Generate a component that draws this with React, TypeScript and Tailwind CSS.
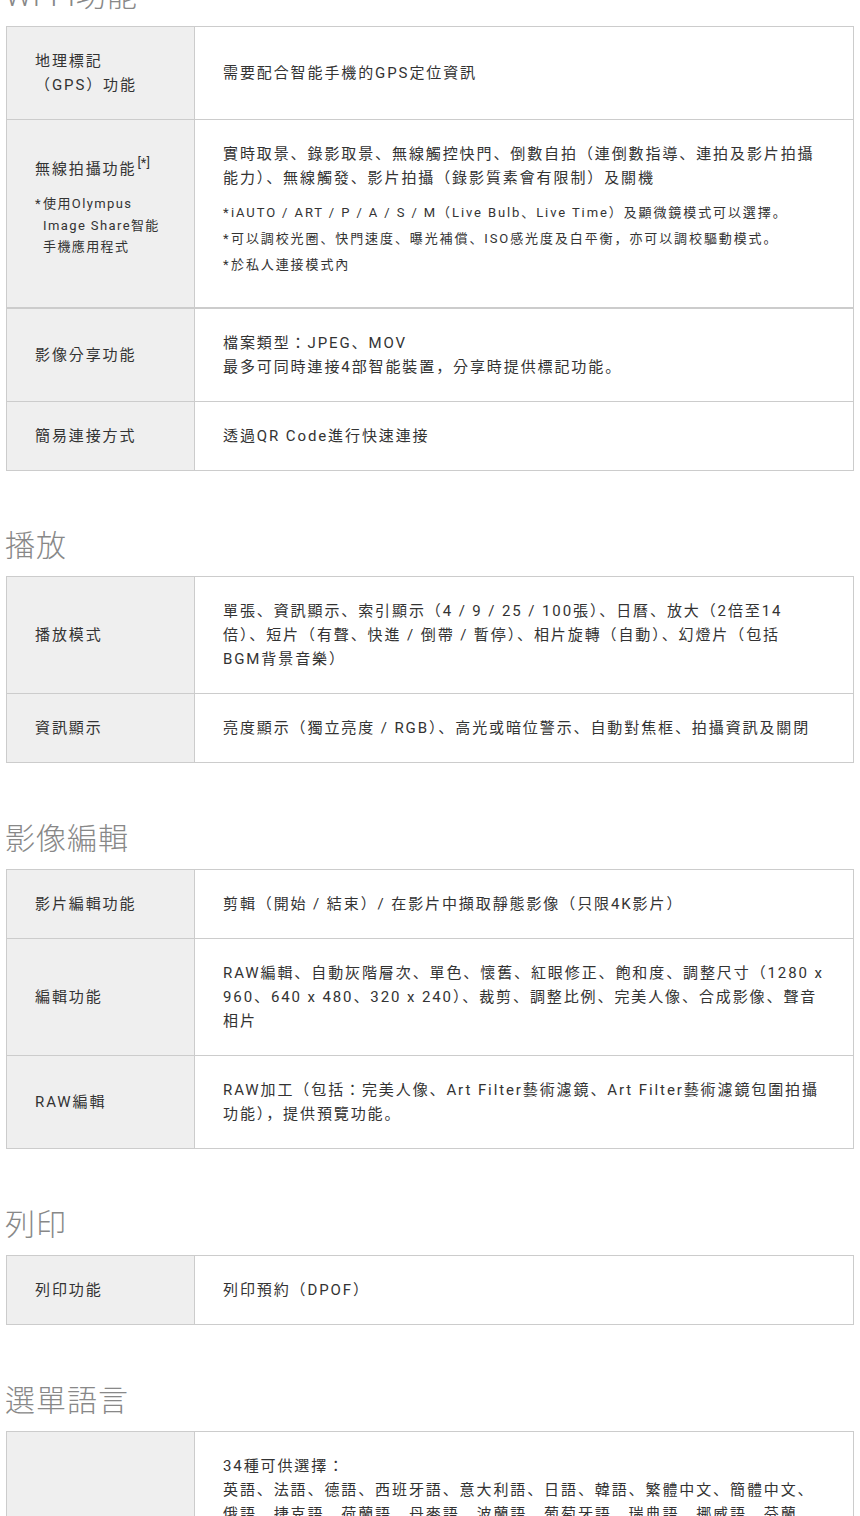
import React from "react";

const FONT = "font-['Roboto','Noto_Sans_CJK_KR',sans-serif]";

function Lines({ lines }: { lines: string[] }) {
  return (
    <div className="text-[15px] leading-[24px] tracking-[1.9px] whitespace-nowrap">
      {lines.map((l, i) => (
        <div key={i}>{l}</div>
      ))}
    </div>
  );
}

function Row({
  label,
  children,
  first,
}: {
  label: React.ReactNode;
  children: React.ReactNode;
  first?: boolean;
}) {
  return (
    <div
      className={
        "grid grid-cols-[188px_1fr] " + (first ? "" : "border-t border-[#cccccc]")
      }
    >
      <div className="bg-[#efefef] border-r border-[#cccccc] px-[28px] py-[22px] flex flex-col justify-center">
        {label}
      </div>
      <div className="px-[28px] py-[22px] flex flex-col justify-center">{children}</div>
    </div>
  );
}

function Label({ lines }: { lines: string[] }) {
  return (
    <div className="text-[15px] leading-[24px] tracking-[1.9px] whitespace-nowrap">
      {lines.map((l, i) => (
        <div key={i}>{l}</div>
      ))}
    </div>
  );
}

function Table({ children }: { children: React.ReactNode }) {
  return <div className="mx-[6px] border border-[#cccccc]">{children}</div>;
}

function Heading({ children }: { children: React.ReactNode }) {
  return (
    <h2 className="px-[5px] text-[30px] leading-[44px] tracking-[1px] font-light text-[#888888] mb-[8px]">
      {children}
    </h2>
  );
}

function Note({ children }: { children: React.ReactNode }) {
  return (
    <div className="flex text-[13px] leading-[22px] tracking-[1.9px] whitespace-nowrap">
      <span className="w-[8px] shrink-0 tracking-normal">*</span>
      <span>{children}</span>
    </div>
  );
}

export default function App() {
  return (
    <div className={`${FONT} bg-white text-[#333333] w-[860px] overflow-hidden`}>
      {/* Wi-Fi */}
      <section className="mt-[-26px]">
        <Heading>Wi-Fi功能</Heading>
        <Table>
          <Row first label={<Label lines={["地理標記", "（GPS）功能"]} />}>
            <Lines lines={["需要配合智能手機的GPS定位資訊"]} />
          </Row>
          <Row
            label={
              <div>
                <div className="text-[15px] leading-[24px] tracking-[1.9px] whitespace-nowrap">
                  無線拍攝功能
                  <span className="inline-block align-top text-[13px] leading-[13px] tracking-normal ml-[1px] mt-[-1px]">
                    [*]
                  </span>
                </div>
                <div className="mt-[12px] mb-[12px] flex text-[13px] leading-[21.5px] tracking-[1.4px] whitespace-nowrap">
                  <span className="w-[8px] shrink-0 tracking-normal">*</span>
                  <span>
                    使用Olympus
                    <br />
                    Image Share智能
                    <br />
                    手機應用程式
                  </span>
                </div>
              </div>
            }
          >
            <div>
              <Lines
                lines={[
                  "實時取景、錄影取景、無線觸控快門、倒數自拍（連倒數指導、連拍及影片拍攝",
                  "能力）、無線觸發、影片拍攝（錄影質素會有限制）及關機",
                ]}
              />
              <div className="mt-[12px] mb-[9px] flex flex-col gap-[4px]">
                <Note>iAUTO / ART / P / A / S / M（Live Bulb、Live Time）及顯微鏡模式可以選擇。</Note>
                <Note>可以調校光圈、快門速度、曝光補償、ISO感光度及白平衡，亦可以調校驅動模式。</Note>
                <Note>於私人連接模式內</Note>
              </div>
            </div>
          </Row>
        </Table>
        <div className="mx-[6px] border border-[#cccccc]">
          <Row first label={<Label lines={["影像分享功能"]} />}>
            <Lines lines={["檔案類型：JPEG、MOV", "最多可同時連接4部智能裝置，分享時提供標記功能。"]} />
          </Row>
          <Row label={<Label lines={["簡易連接方式"]} />}>
            <Lines lines={["透過QR Code進行快速連接"]} />
          </Row>
        </div>
      </section>

      {/* 播放 */}
      <section className="mt-[53px]">
        <Heading>播放</Heading>
        <Table>
          <Row first label={<Label lines={["播放模式"]} />}>
            <Lines
              lines={[
                "單張、資訊顯示、索引顯示（4 / 9 / 25 / 100張）、日曆、放大（2倍至14",
                "倍）、短片（有聲、快進 / 倒帶 / 暫停）、相片旋轉（自動）、幻燈片（包括",
                "BGM背景音樂）",
              ]}
            />
          </Row>
          <Row label={<Label lines={["資訊顯示"]} />}>
            <Lines lines={["亮度顯示（獨立亮度 / RGB）、高光或暗位警示、自動對焦框、拍攝資訊及關閉"]} />
          </Row>
        </Table>
      </section>

      {/* 影像編輯 */}
      <section className="mt-[54px]">
        <Heading>影像編輯</Heading>
        <Table>
          <Row first label={<Label lines={["影片編輯功能"]} />}>
            <Lines lines={["剪輯（開始 / 結束）/ 在影片中擷取靜態影像（只限4K影片）"]} />
          </Row>
          <Row label={<Label lines={["編輯功能"]} />}>
            <Lines
              lines={[
                "RAW編輯、自動灰階層次、單色、懷舊、紅眼修正、飽和度、調整尺寸（1280 x",
                "960、640 x 480、320 x 240）、裁剪、調整比例、完美人像、合成影像、聲音",
                "相片",
              ]}
            />
          </Row>
          <Row label={<Label lines={["RAW編輯"]} />}>
            <Lines
              lines={[
                "RAW加工（包括：完美人像、Art Filter藝術濾鏡、Art Filter藝術濾鏡包圍拍攝",
                "功能），提供預覽功能。",
              ]}
            />
          </Row>
        </Table>
      </section>

      {/* 列印 */}
      <section className="mt-[54px]">
        <Heading>列印</Heading>
        <Table>
          <Row first label={<Label lines={["列印功能"]} />}>
            <Lines lines={["列印預約（DPOF）"]} />
          </Row>
        </Table>
      </section>

      {/* 選單語言 */}
      <section className="mt-[54px] mb-[60px]">
        <Heading>選單語言</Heading>
        <Table>
          <Row first label={<Label lines={["選單語言"]} />}>
            <Lines
              lines={[
                "34種可供選擇：",
                "英語、法語、德語、西班牙語、意大利語、日語、韓語、繁體中文、簡體中文、",
                "俄語、捷克語、荷蘭語、丹麥語、波蘭語、葡萄牙語、瑞典語、挪威語、芬蘭",
                "語、克羅地亞語、斯洛文尼亞語、匈牙利語、希臘語、斯洛伐克語、土耳其",
                "語、拉脫維亞語、愛沙尼亞語、立陶宛語、烏克蘭語、塞爾維亞語、保加利",
                "亞語、羅馬尼亞語、印尼語、泰語、馬來語",
              ]}
            />
          </Row>
        </Table>
      </section>
    </div>
  );
}
